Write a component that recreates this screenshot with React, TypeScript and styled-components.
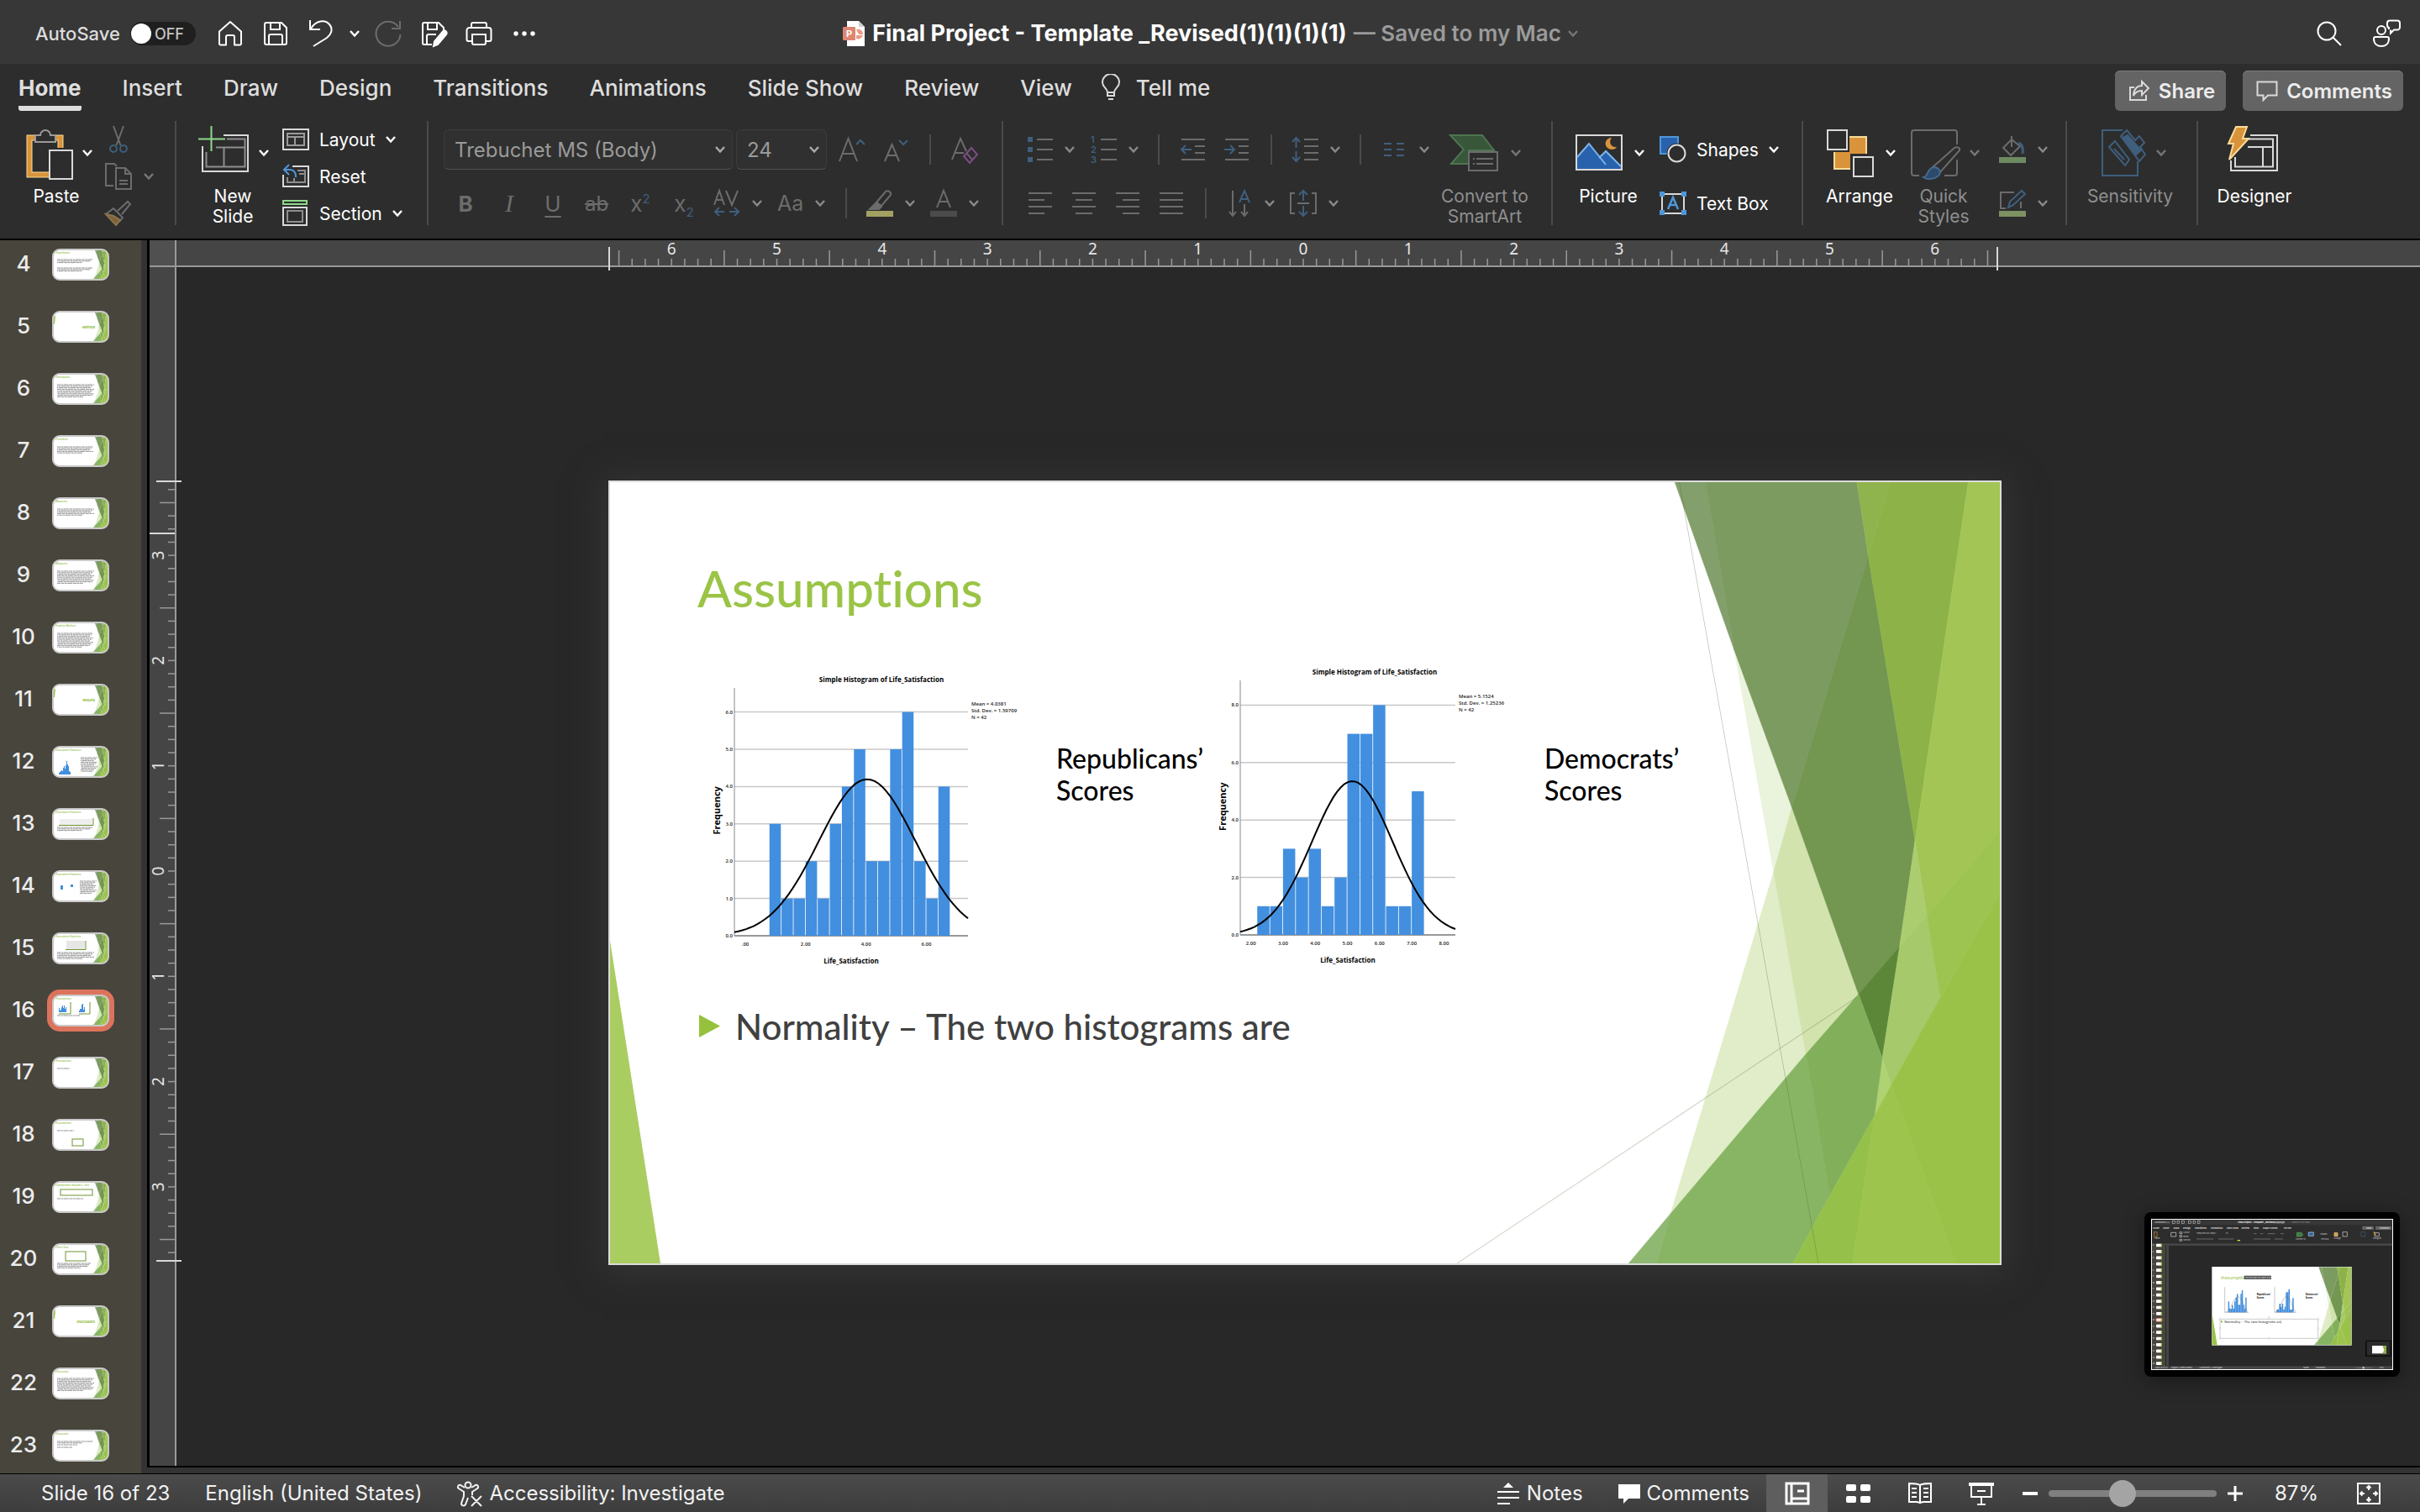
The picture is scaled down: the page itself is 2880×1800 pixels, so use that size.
import React from "react";
import styled, { createGlobalStyle, css } from "styled-components";

const GlobalStyle = createGlobalStyle`
  *, *::before, *::after { box-sizing: border-box; }
  html, body { margin: 0; padding: 0; background: #282828; }
  body { font-family: Inter, "Open Sans", sans-serif; color: #fff; overflow: hidden; }
  button, select, input { font: inherit; color: inherit; margin: 0; }
  button { background: none; border: 0; padding: 0; }
  h1, h2, p, ul, ol { margin: 0; padding: 0; font-weight: inherit; }
  ul, ol { list-style: none; }
  svg { display: block; flex: none; }
`;

const ink = "#d9d9d9";
const dim = "#6c6c6c";
const dimBlue = "#3f5f7d";
const blue = "#4f97d8";
const orange = "#d9933b";
const cream = "#f7dc9a";
const green = "#8fd98a";

/* ---------- shell ---------- */

const Window = styled.div`
  display: flex;
  flex-direction: column;
  height: 100vh;
  min-height: 900px;
  overflow: hidden;
`;

const TitleBar = styled.header`
  display: grid;
  grid-template-columns: 1fr auto 1fr;
  align-items: center;
  height: 76px;
  padding: 4px 6px 0;
  background: #373737;
  flex: none;
`;

const TitleTools = styled.div<{ $end?: boolean }>`
  display: flex;
  align-items: center;
  justify-content: ${(p) => (p.$end ? "flex-end" : "flex-start")};
`;

const AutoSave = styled.label`
  display: flex;
  align-items: center;
  gap: 12px;
  margin: 0 14px 0 36px;
  font-size: 22px;
  font-weight: 500;
  color: #dcdcdc;
`;

const Switch = styled.span`
  position: relative;
  display: flex;
  align-items: center;
  justify-content: flex-end;
  width: 78px;
  height: 28px;
  padding-right: 14px;
  border-radius: 14px;
  background: #1f1f1f;
  font-size: 18px;
  color: #c4c4c4;
  input {
    position: absolute;
    inset: 0;
    width: 100%;
    height: 100%;
    appearance: none;
  }
  &::before {
    content: "";
    position: absolute;
    left: 1px;
    top: 2px;
    width: 24px;
    height: 24px;
    border-radius: 50%;
    background: #fff;
  }
`;

const IconButton = styled.button<{ $w?: number }>`
  display: flex;
  align-items: center;
  justify-content: center;
  width: ${(p) => p.$w ?? 54}px;
  height: 40px;
`;

const DocTitle = styled.h1`
  display: flex;
  align-items: center;
  gap: 8px;
  font-size: 27px;
  font-weight: 700;
  line-height: 32px;
  white-space: nowrap;
  span { color: #9b9b9b; font-size: 26px; font-weight: 600; }
`;

const TabBar = styled.nav`
  display: flex;
  align-items: flex-start;
  height: 64px;
  padding: 8px 20px 0 22px;
  background: #2d2d2d;
  flex: none;
`;

const Tabs = styled.div`
  display: flex;
  gap: 49px;
`;

const Tab = styled.button<{ $active?: boolean }>`
  display: flex;
  align-items: center;
  gap: 18px;
  height: 48px;
  padding: 2px 0 4px;
  border-bottom: 6px solid ${(p) => (p.$active ? "#dedede" : "transparent")};
  border-radius: 3px;
  font-size: 26px;
  font-weight: ${(p) => (p.$active ? 700 : 500)};
  color: #dedede;
  white-space: nowrap;
`;

const TellMe = styled(Tab)`
  margin-left: 34px;
`;

const Actions = styled.div`
  display: flex;
  gap: 20px;
  margin-left: auto;
`;

const ActionButton = styled.button`
  display: flex;
  align-items: center;
  gap: 10px;
  height: 48px;
  padding: 0 13px 0 16px;
  border-radius: 6px;
  background: #646464;
  box-shadow: inset 0 1px 0 #7c7c7c;
  font-size: 24px;
  font-weight: 600;
  color: #ececec;
`;

/* ---------- ribbon ---------- */

const Ribbon = styled.div`
  display: flex;
  align-items: flex-start;
  height: 144px;
  padding-top: 4px;
  background: #2d2d2d;
  flex: none;
`;

const Group = styled.section<{ $w?: number; $pad: number; $gap?: number }>`
  display: flex;
  align-items: center;
  gap: ${(p) => p.$gap ?? 14}px;
  height: 132px;
  width: ${(p) => (p.$w ? p.$w + "px" : "auto")};
  padding-left: ${(p) => p.$pad}px;
  flex: none;
`;

const Divider = styled.i<{ $small?: boolean }>`
  width: 2px;
  height: ${(p) => (p.$small ? 36 : 124)}px;
  margin: ${(p) => (p.$small ? "0 14px" : "0")};
  background: #4b4b4b;
  flex: none;
`;

const Stack = styled.div`
  display: flex;
  flex-direction: column;
`;

const ToolRow = styled.div`
  display: flex;
  align-items: center;
  height: 64px;
`;

const LargeTool = styled.button<{ $off?: boolean }>`
  display: flex;
  flex-direction: column;
  align-items: center;
  gap: 8px;
  height: 120px;
  font-size: 21px;
  line-height: 24px;
  color: ${(p) => (p.$off ? "#8f8f8f" : "#fff")};
  > span:first-child {
    display: flex;
    align-items: center;
    gap: 10px;
  }
  > span:last-child {
    display: flex;
    justify-content: center;
    width: 86px;
    text-align: center;
    white-space: pre;
  }
`;

const SmallTool = styled.button`
  display: flex;
  align-items: center;
  justify-content: center;
  width: 52px;
  height: 44px;
`;

const MenuTool = styled.button<{ $h?: number }>`
  display: flex;
  align-items: center;
  gap: 14px;
  width: 76px;
  height: ${(p) => p.$h ?? 44}px;
  padding-left: 9px;
`;

const TextTool = styled.button<{ $h: number }>`
  display: flex;
  align-items: center;
  gap: 12px;
  height: ${(p) => p.$h}px;
  font-size: 21px;
  color: #fff;
  white-space: nowrap;
`;

const PickerBox = styled.span<{ $w: number }>`
  position: relative;
  display: flex;
  align-items: center;
  width: ${(p) => p.$w}px;
  height: 48px;
  margin-right: 4px;
  svg { position: absolute; right: 9px; pointer-events: none; }
`;

const Picker = styled.select`
  appearance: none;
  width: 100%;
  height: 100%;
  padding: 0 12px;
  border: 1px solid #3c3c3c;
  border-bottom-color: #505050;
  border-radius: 6px;
  background: #303030;
  color: #9a9a9a;
  font-size: 24px;
`;

/* ---------- body ---------- */

const Body = styled.div`
  display: flex;
  flex: 1;
  min-height: 0;
  border-top: 2px solid #000;
  background: #333;
`;

const SlideList = styled.ol`
  width: 168px;
  overflow: hidden;
  background: #48453d;
  flex: none;
  li:first-child { margin-top: -8px; }
`;

const SlideItem = styled.button`
  display: flex;
  align-items: center;
  width: 100%;
  height: 74px;
  font-size: 26px;
  font-weight: 500;
  color: #ececec;
  > span:first-child { width: 56px; padding-bottom: 4px; text-align: center; }
`;

const Thumb = styled.span<{ $active?: boolean }>`
  width: 68px;
  height: 38px;
  margin-left: 6px;
  border: 2px solid #c9c9c9;
  border-radius: 9px;
  overflow: hidden;
  background: #fff;
  ${(p) => p.$active && css`box-shadow: 0 0 0 6px #dc735d;`}
`;

const Workspace = styled.main`
  display: grid;
  grid-template: 32px 1fr / 32px 1fr;
  flex: 1;
  min-width: 0;
  margin: 0 0 7px 7px;
  border-left: 3px solid #000;
  border-bottom: 2px solid #000;
`;

const Corner = styled.div`
  background: #505050;
  border-right: 2px solid #999;
  border-bottom: 2px solid #999;
`;

const RulerX = styled.div`
  display: flex;
  justify-content: center;
  padding-left: 12px;
  background: #454545;
  border-bottom: 2px solid #999;
  z-index: 1;
  svg { overflow: visible; }
`;

const RulerY = styled.div`
  display: flex;
  align-items: center;
  min-height: 0;
  padding-top: 10px;
  background: #454545;
  border-right: 2px solid #999;
  z-index: 1;
  svg { overflow: visible; }
`;

const Stage = styled.div`
  position: relative;
  display: flex;
  align-items: center;
  justify-content: center;
  min-height: 0;
  min-width: 0;
  padding: 14px 0 0 16px;
  background: #282828;
`;

const Slide = styled.article`
  position: relative;
  width: 1658px;
  height: 934px;
  border: 2px solid #dcdcdc;
  background: #fff;
  box-shadow: 0 4px 36px 8px rgba(64, 64, 64, 0.5);
  font-family: Lato, sans-serif;
  font-weight: 500;
  font-variant-ligatures: none;
  flex: none;
  > svg { position: absolute; }
`;

const SlideTitle = styled.h2`
  position: absolute;
  left: 104px;
  top: 90px;
  font-size: 60px;
  line-height: 72px;
  color: #9ac446;
`;

const ChartLabel = styled.p<{ $x: number }>`
  position: absolute;
  left: ${(p) => p.$x}px;
  top: 310px;
  font-size: 32px;
  line-height: 38px;
  color: #000;
  white-space: pre;
`;

const Bullet = styled.ul`
  position: absolute;
  left: 106px;
  top: 622px;
  font-size: 42px;
  line-height: 52px;
  color: #404040;
  li { display: flex; align-items: center; gap: 18px; white-space: nowrap; }
`;

const FloatingPreview = styled.figure`
  position: absolute;
  right: 24px;
  bottom: 106px;
  margin: 0;
  padding: 8px;
  border-radius: 8px;
  background: #000;
  box-shadow: 0 4px 24px rgba(0, 0, 0, 0.4);
  svg { border: 1px solid #fff; }
`;

/* ---------- status bar ---------- */

const StatusBar = styled.footer`
  display: flex;
  align-items: center;
  height: 46px;
  padding-right: 26px;
  border-top: 1px solid #000;
  background: linear-gradient(#4b4b4b, #3d3d3d);
  font-size: 24px;
  color: #f2f2f2;
  flex: none;
`;

const StatusButton = styled.button<{ $pad: number }>`
  display: flex;
  align-items: center;
  gap: 8px;
  height: 44px;
  padding-left: ${(p) => p.$pad}px;
  white-space: nowrap;
`;

const StatusEnd = styled.div`
  display: flex;
  align-items: center;
  margin-left: auto;
`;

const ViewButtons = styled.div`
  display: flex;
  margin-left: 20px;
`;

const ViewButton = styled.button<{ $active?: boolean }>`
  display: flex;
  align-items: center;
  justify-content: center;
  width: 73px;
  height: 45px;
  background: ${(p) => (p.$active ? "#5e5e5e" : "transparent")};
`;

const ZoomRange = styled.input`
  appearance: none;
  width: 200px;
  height: 32px;
  background: transparent;
  &::-webkit-slider-runnable-track {
    height: 8px;
    border-radius: 4px;
    background: #7f7f7f;
  }
  &::-webkit-slider-thumb {
    appearance: none;
    width: 32px;
    height: 32px;
    margin-top: -12px;
    border-radius: 50%;
    background: #a4a4a4;
  }
`;

const ZoomValue = styled.output`
  width: 102px;
  text-align: center;
`;

/* ---------- icons ---------- */

const Chevron = ({ c = "#fff" }: { c?: string }) => (
  <svg width="12" height="10" fill="none" stroke={c} strokeWidth="2.5">
    <path d="M1 2l5 5.500 5-5.500" />
  </svg>
);

type IcoProps = { s?: number; c?: string; w?: number; children: React.ReactNode };
const Ico = ({ s = 32, c = dim, w = 2, children }: IcoProps) => (
  <svg width={s} height={s} viewBox={`0 0 ${s} ${s}`} overflow="visible" fill="none" stroke={c} strokeWidth={w}>
    {children}
  </svg>
);

const HomeIcon = () => <Ico c="#fff"><path d="M3 13.500L16 2l13 11.500V28a1.500 1.500 0 0 1-1.500 1.500H21V20a2 2 0 0 0-2-2h-6a2 2 0 0 0-2 2v9.500H4.500A1.500 1.500 0 0 1 3 28z" strokeLinejoin="round" /></Ico>;
const SaveIcon = () => <Ico c="#fff"><path d="M5 3h18l6 6v18a2 2 0 0 1-2 2H5a2 2 0 0 1-2-2V5a2 2 0 0 1 2-2zM10 3v8h11V3M8 29V19a2 2 0 0 1 2-2h12a2 2 0 0 1 2 2v10" /></Ico>;
const UndoIcon = () => <Ico c="#fff"><path d="M3 0v11h12M4 10C10 0 21-1 26 5c5 6 2 12-3 16L7 31" /></Ico>;
const RedoIcon = () => <Ico c={dim}><path d="M30 1v9H20M28 8A14.500 14.500 0 1 0 30.500 17" /></Ico>;
const SavePenIcon = () => (
  <Ico c="#fff">
    <path d="M14 29H5a2 2 0 0 1-2-2V5a2 2 0 0 1 2-2h17l6 6v4M9 3v8h11V3M8 29V19a2 2 0 0 1 2-2h9" />
    <path d="M27 13.500a2.500 2.500 0 0 1 4 3.500L21 29l-5 2 1-5.500z" fill="#fff" />
  </Ico>
);
const PrintIcon = () => <Ico c="#fff"><path d="M8 25H3.500A2 2 0 0 1 1.500 23V12a3 3 0 0 1 3-3h23a3 3 0 0 1 3 3v11a2 2 0 0 1-2 2H24M7 9V5a2 2 0 0 1 2-2h14a2 2 0 0 1 2 2v4M8 17h16v10a2 2 0 0 1-2 2H10a2 2 0 0 1-2-2z" /></Ico>;
const DotsIcon = () => <Ico c="none"><g fill="#fff"><circle cx="6" cy="16" r="2.700" /><circle cx="16" cy="16" r="2.700" /><circle cx="26" cy="16" r="2.700" /></g></Ico>;
const SearchIcon = () => <Ico c="#fff"><circle cx="13" cy="13" r="10.500" /><path d="M20.500 20.500L30 30" /></Ico>;
const PresenceIcon = () => (
  <Ico s={34} c="#fff">
    <circle cx="11" cy="13" r="5" />
    <path d="M4 21h14a2 2 0 0 1 2 2c0 6-4 9-9 9s-9-3-9-9a2 2 0 0 1 2-2z" />
    <path d="M20 12v-2a3 3 0 0 1-2-3V4.500a3 3 0 0 1 3-3h9a3 3 0 0 1 3 3v5a3 3 0 0 1-3 3h-4l-4 4v-4" />
  </Ico>
);
const FileIcon = () => (
  <svg width="28" height="30">
    <path d="M6 0h14l7 7v23H6z" fill="#fff" />
    <path d="M27 7h-7V0z" fill="#d0d0d0" />
    <path d="M17 10a6 6 0 0 1 8 6h-5z M17 21a6 6 0 0 0 8-4h-8z" fill="#ea9a86" />
    <rect x="1" y="7" width="15" height="16" rx="1" fill="#dd8672" />
    <text x="5" y="19" fontSize="11" fontWeight="700" fill="#fff" fontFamily="Inter">P</text>
  </svg>
);
const BulbIcon = () => (
  <svg width="24" height="32" fill="none" stroke={ink} strokeWidth="2">
    <path d="M8 22c0-5-6-6-6-12a10 10 0 0 1 20 0c0 6-6 7-6 12zM8 22v4h8v-4M9 30h6" />
  </svg>
);
const ShareIcon = () => <Ico s={26} c={ink}><path d="M7 9H2v15h19v-6M16 2l8 8-8 8v-5c-5 0-8 2-10 6 0-7 4-12 10-12z" /></Ico>;
const CommentIcon = () => <Ico s={26} c={ink}><path d="M1.500 2.500h23v16H14l-5.500 5.500v-5.500h-7z" /></Ico>;

const PasteIcon = () => (
  <Ico s={64}>
    <path d="M19 14h-8v44h23M42 14h6v12" stroke={cream} strokeWidth="7" />
    <path d="M19 14h-8v44h23M42 14h6v12" stroke={orange} strokeWidth="5" />
    <path d="M18 19v-8h6a6 6 0 0 1 12 0h6v8z" stroke="#9a9a9a" />
    <rect x="35" y="29" width="27" height="34" stroke={ink} />
  </Ico>
);
const CutIcon = () => <Ico><path d="M10 0l8.500 23M22 0l-8.500 23" /><g stroke={dimBlue}><circle cx="10" cy="27" r="4" /><circle cx="22" cy="27" r="4" /></g></Ico>;
const CopyIcon = () => <Ico><path d="M10 27H1V1h10l3 3M13 6h11l7 7v18H13zM24 6v7h7M17 21h10M17 25h10" /></Ico>;
const BrushIcon = () => <Ico><path d="M1 17l9-7 11 11-4 5M15 13L27 2l3 3-10 12" /><path d="M1 17l12 13 5-6-8-5z" fill="#7d6236" stroke="#8a7450" /></Ico>;
const NewSlideIcon = () => (
  <Ico s={64}>
    <path d="M11.500 31v17.500h46v-33H36M23 25.500h34M32.500 26v22" stroke="#8e8e8e" />
    <path d="M7 24v30h54V11H32" stroke={ink} />
    <path d="M2 15.500h32M17.500 0v30" stroke={green} />
  </Ico>
);
const LayoutIcon = () => <Ico c={ink}><rect x="1" y="4" width="30" height="24" /><path d="M6 9h20v14H6zM6 13h20M15 13v10" stroke="#9a9a9a" /></Ico>;
const ResetIcon = () => (
  <Ico c={ink}>
    <path d="M12 4h19v24H1V14" />
    <path d="M18 9h9v14H6v-6M20 13h7M14 18v5" stroke="#8e8e8e" />
    <path d="M8 2L2 8l6 6M2 8h7c5 0 7 4 7 9" stroke={blue} />
  </Ico>
);
const SectionIcon = () => <Ico c={ink}><rect x="1" y="1" width="28" height="4" stroke={green} /><rect x="1" y="9" width="28" height="21" /><rect x="6" y="13" width="18" height="13" stroke="#8e8e8e" /></Ico>;

const Glyph = styled.span<{ $size?: number; $bold?: boolean; $italic?: boolean; $line?: string }>`
  font-size: ${(p) => p.$size ?? 26}px;
  font-weight: ${(p) => (p.$bold ? 700 : 400)};
  font-style: ${(p) => (p.$italic ? "italic" : "normal")};
  font-family: ${(p) => (p.$italic ? '"Liberation Serif", serif' : "inherit")};
  text-decoration: ${(p) => p.$line ?? "none"};
  text-underline-offset: 5px;
  text-decoration-thickness: 2px;
  color: ${dim};
  sup, sub { font-size: 15px; color: ${dimBlue}; line-height: 0; }
`;

const GrowIcon = ({ down }: { down?: boolean }) => (
  <Ico><path d={down ? "M3 30L11.500 10 20 30M6 23h11" : "M1 30L11.500 3 22 30M5 21h13"} /><path d={down ? "M20 5l5 5 5-5" : "M21 10l5-5 5 5"} stroke={dimBlue} /></Ico>
);
const ClearIcon = () => <Ico><path d="M1 28L11 3l7 15M4 20h11" /><path d="M24 14l7 8-9 10-7-8zM18 20l7 8" stroke="#7a4f80" /></Ico>;
const SpacingIcon = () => (
  <Ico><path d="M1 18L7 1l6 17M4 12h6M15 1l7 17 7-17" /><path d="M2 26h11M19 26h11M7 21l-5 5 5 5M25 21l5 5-5 5" stroke={dimBlue} /></Ico>
);
const HighlightIcon = () => <Ico><path d="M12 15l11-13c3-2 7 1 6 4L18 19z" /><path d="M12 15l6 5-3 3H4z" fill={dim} /><rect y="25" width="32" height="7" fill="#a3a162" stroke="none" /></Ico>;
const FontColorIcon = () => <Ico><path d="M8 21L16 1l8 20M11 14h10" /><rect y="25" width="32" height="7" fill="#4b4b4b" stroke="none" /></Ico>;

const BulletsIcon = () => <Ico><path d="M13 4h19M13 16h19M13 28h19" /><path d="M2 4h6M2 16h6M2 28h6" stroke={dimBlue} strokeWidth="6" /></Ico>;
const NumbersIcon = () => (
  <Ico><path d="M13 4h19M13 16h19M13 28h19" /><g fill={dimBlue} stroke="none" fontSize="11" fontWeight="600"><text x="1" y="8">1</text><text x="1" y="20">2</text><text x="1" y="32">3</text></g></Ico>
);
const IndentIcon = ({ out }: { out?: boolean }) => (
  <Ico><path d="M2 4h28M18 12h12M18 20h12M2 28h28" /><path d={out ? "M14 16H2M7 11l-5 5 5 5" : "M1 16h12M8 11l5 5-5 5"} stroke={dimBlue} /></Ico>
);
const LineSpaceIcon = () => <Ico><path d="M15 4h17M15 12h17M15 20h17M15 28h17" /><path d="M5.500 2v12M1 7l4.500-5L10 7M5.500 18v12M1 25l4.500 5 4.500-5" stroke={dimBlue} /></Ico>;
const ColumnsIcon = () => <Ico c={dimBlue}><path d="M4 9h9M4 16h9M4 23h9M19 9h9M19 16h9M19 23h9" /></Ico>;
const AlignIcon = ({ d }: { d: string }) => <Ico><path d={d} /></Ico>;
const TextDirIcon = () => <Ico><path d="M8 1v30M4 26l4 5 4-5M22 17v14M18 26l4 5 4-5" /><path d="M16 15l6-14 6 14M18 11h8" stroke={dimBlue} /></Ico>;
const VAlignIcon = () => <Ico><path d="M6 4H1v24h5M26 4h5v24h-5M9 16h14" /><path d="M16 13V1M11 6l5-5 5 5M16 19v12M11 26l5 5 5-5" stroke={dimBlue} /></Ico>;

const SmartArtIcon = () => (
  <Ico s={64}><path d="M2 11h38l14 18H24v16H3l15-17z" fill="#38563a" stroke="#4f7551" /><rect x="24" y="31" width="34" height="22" fill="#2d2d2d" /><path d="M29 39h2M33 39h20M29 45h2M33 45h20" /></Ico>
);
const PictureIcon = () => (
  <Ico s={64}>
    <rect x="5" y="11" width="54" height="41" stroke={ink} />
    <path d="M6 51V37l14-16 14 16 7-8 17 18v4z" fill="#2862ad" stroke="none" />
    <path d="M6 37l14-16 20 25M32 38l8-8 18 18" stroke="#7db4ea" />
    <path d="M47 14c-4 5-1 12 6 11-2 4-9 4-12 0s-1-11 6-11z" fill={orange} stroke="none" />
  </Ico>
);
const ShapesIcon = () => <Ico><rect x="1" y="1" width="21" height="20" fill="#2862ad" stroke={blue} /><circle cx="20.500" cy="20.500" r="12" fill="#2d2d2d" stroke="none" /><circle cx="20.500" cy="20.500" r="10" stroke={ink} /></Ico>;
const TextBoxIcon = () => (
  <Ico><rect x="3" y="5" width="26" height="23" stroke={ink} /><path d="M10 23l6-14 6 14M12 18h8" stroke={blue} strokeWidth="2.500" />
    <g fill={blue} stroke="none"><rect y="2" width="6" height="6" /><rect x="26" y="2" width="6" height="6" /><rect y="24" width="6" height="6" /><rect x="26" y="24" width="6" height="6" /></g></Ico>
);
const ArrangeIcon = () => (
  <Ico s={64}><rect x="13" y="13" width="38" height="38" fill={orange} stroke={cream} /><g fill="#2d2d2d"><path d="M3 3h28v28H3zM32 33h31v30H32z" stroke="none" /><rect x="5" y="5" width="23" height="23" stroke={ink} /><rect x="36" y="37" width="23" height="23" stroke={ink} /></g></Ico>
);
const QuickStylesIcon = () => (
  <Ico s={64}>
    <path d="M14 59H8a3 3 0 0 1-3-3V8a3 3 0 0 1 3-3h48a3 3 0 0 1 3 3v14M59 40v16a3 3 0 0 1-3 3H44" />
    <path d="M30 49L56 26c3-2 7 0 6 3L39 55z" />
    <path d="M19 61c6-1 4-10 12-12 8 0 10 8 5 11-5 4-13 4-17 1z" fill="#2b4a6c" stroke="#456a8f" />
  </Ico>
);
const FillIcon = () => <Ico><path d="M5 14L15 4l10 8-11 11zM15 4V0M15 4v9" /><path d="M23 8c5 2 6 7 5 13" stroke={dimBlue} strokeWidth="3" /><rect y="25" width="32" height="7" fill="#6d8a62" stroke="none" /></Ico>;
const OutlineIcon = () => <Ico><path d="M18 3H2v19h6M26 14v8" /><path d="M11 21l2-7L27 1l4 4-14 13z" stroke={dimBlue} /><rect y="25" width="32" height="7" fill="#7d9162" stroke="none" /></Ico>;
const SensitivityIcon = () => (
  <Ico s={64} c={dimBlue}>
    <path d="M34 5H10v54h42V42" />
    <path d="M18 25l7-7 17 22-5 7zM24 27l12 13" />
    <path d="M32 12l7-7 10 12 5-5 6 8-5 5 6 9-7 8z" fill="#2d2d2d" /><path d="M34 14l16 20 6-5-16-18z" fill={dimBlue} />
  </Ico>
);
const DesignerIcon = () => (
  <Ico s={64} c={ink}>
    <path d="M27 11h32v42H4V41M25 15.500h29v33H9V37M24 25h30M42 25v23" />
    <path d="M10 1h13l-5 14h7L2 40l5-19H1z" fill={orange} stroke={cream} />
  </Ico>
);

/* ---------- slide artwork ---------- */

const facets: [string, string][] = [
  ["#eaf3db", "490,350 695,655 630,780"],
  ["#e0edc8", "630,780 745,1135 262,1445"],
  ["#d2e3ae", "695,655 933,1018 745,1135 630,780"],
  ["#829f6c", "277,22 385,22 490,350"],
  ["#7c9b61", "385,22 927,22 968,165 695,655 490,350"],
  ["#739751", "968,165 1135,720 1080,925 933,1018 695,655"],
  ["#5c8739", "933,1018 1080,925 1018,1143"],
  ["#8fb44e", "927,22 1045,22 968,165"],
  ["#8db248", "1045,22 1325,22 1135,720 968,165"],
  ["#a2c555", "1325,22 1438,22 1438,700 1177,865 1135,720"],
  ["#abcd70", "1135,720 1177,865 1080,925"],
  ["#a5c96b", "1080,925 1177,865 1225,1025 1050,1195 1018,1143"],
  ["#afd273", "1018,1143 1050,1195 990,1255"],
  ["#9dc450", "1177,865 1438,700 1438,820 1225,1025"],
  ["#8fb872", "112,1542 262,1445 212,1542"],
  ["#88b564", "262,1445 745,1135 830,1411 698,1542 212,1542"],
  ["#82b05a", "745,1135 933,1018 1018,1143 990,1255 830,1411"],
  ["#95c04a", "698,1542 830,1411 990,1255 912,1542"],
  ["#9dc44d", "912,1542 990,1255 1050,1195 1280,1542"],
  ["#9bc248", "1050,1195 1225,1025 1438,820 1438,1542 1280,1542"],
];

const FacetArt = (p: React.SVGProps<SVGSVGElement>) => (
  <svg viewBox="-501 22 1939 1520" preserveAspectRatio="none" {...p}>
    {facets.map(([fill, points]) => (
      <polygon key={points} points={points} fill={fill} stroke={fill} strokeWidth="1" />
    ))}
    <g stroke="#506030" strokeOpacity="0.400" strokeWidth="2" fill="none">
      <path d="M293 22L790 1542" />
      <path d="M-501 1542L925 1025" strokeOpacity="0.250" />
    </g>
  </svg>
);

type HistogramProps = {
  x: number; y: number; baseline: number; axisLeft: number; axisRight: number;
  unitX: number; zeroX: number; unitY: number; start: number; bars: number[];
  mean: number; sd: number; stepY: number; ticks: string[]; titleX: number; stats: string[]; labelX: number;
};

/* Histogram in slide coordinates, with the normal curve for the same mean and deviation. */
const Histogram = (h: HistogramProps) => {
  const px = (v: number) => h.zeroX + v * h.unitX;
  const py = (v: number) => h.baseline - v * h.unitY;
  const curve = Array.from({ length: 61 }, (_, i) => {
    const x = h.axisLeft + ((h.axisRight - h.axisLeft) * i) / 60;
    const z = ((x - h.zeroX) / h.unitX - h.mean) / h.sd;
    const f = (42 * 0.4 * Math.exp((-z * z) / 2)) / (h.sd * Math.sqrt(2 * Math.PI));
    return `${i ? "L" : "M"}${x.toFixed(1)} ${py(f).toFixed(1)}`;
  }).join("");
  const top = Math.max(...h.bars);
  const levels = Array.from({ length: top / h.stepY + 1 }, (_, i) => i * h.stepY);
  return (
    <svg style={{ left: h.x, top: h.y }} width="380" height="370" viewBox={`${h.x} ${h.y} 380 370`} fontFamily="Open Sans" fontSize="6" fontWeight="600">
      {levels.map((v) => (
        <g key={v}>
          <path d={`M${h.axisLeft} ${py(v)}H${h.axisRight}`} stroke={v ? "#c8c8c8" : "#777"} strokeWidth="1.500" />
          <text x={h.axisLeft - 2} y={py(v) + 2} textAnchor="end" fill="#222">{v.toFixed(1)}</text>
        </g>
      ))}
      <path d={`M${h.axisLeft} ${h.y + 25}V${h.baseline}`} stroke="#888" />
      {h.bars.map((n, i) => (
        <rect key={i} x={px(h.start + i * 0.4)} y={py(n)} width={h.unitX * 0.4 - 0.8} height={n * h.unitY} fill="#428fdf" />
      ))}
      <path d={curve} fill="none" stroke="#000" strokeWidth="2" />
      {h.ticks.map((t) => (
        <text key={t} x={px(Number(t))} y={h.baseline + 12} textAnchor="middle" fill="#222">{t}</text>
      ))}
      {h.stats.map((t, i) => (
        <text key={t} x={h.axisRight + 4} y={h.y + 46 + i * 8} fill="#222">{t}</text>
      ))}
      <g fontWeight="700" fontSize="8" textAnchor="middle">
        <text x={h.titleX} y={h.y + 18}>Simple Histogram of Life_Satisfaction</text>
        <text x={h.labelX} y={h.baseline + 33}>Life_Satisfaction</text>
        <text fontSize="11" transform={`translate(${h.axisLeft - 17} ${(py(top) + h.baseline) / 2 - 16}) rotate(-90)`}>Frequency</text>
      </g>
    </svg>
  );
};

/* ---------- rulers ---------- */

const UNIT = 125.3;

const HorizontalRuler = () => {
  const ticks = [];
  for (let i = -52; i <= 52; i++) ticks.push(i);
  return (
    <svg width="1652" height="30" viewBox="-826 0 1652 30">
      {ticks.map((i) => (
        <path key={i} d={`M${(i * UNIT) / 8} ${Math.abs(i) % 8 === 4 ? 12 : 22}V30`} stroke="#999" strokeWidth="1.500" />
      ))}
      <path d="M-826 8V36M826 8V36" stroke="#d8d8d8" strokeWidth="2" />
      {[-6, -5, -4, -3, -2, -1, 0, 1, 2, 3, 4, 5, 6].map((n) => (
        <text key={n} x={n * UNIT} y="17" fontSize="19" textAnchor="middle" fill="#e6e6e6" fontFamily="Noto Sans">{Math.abs(n)}</text>
      ))}
    </svg>
  );
};

const VerticalRuler = () => {
  const ticks = [];
  for (let i = -29; i <= 29; i++) ticks.push(i);
  return (
    <svg width="30" height="928" viewBox="0 -464 30 928">
      {ticks.map((i) => (
        <path key={i} d={`M${Math.abs(i) % 8 === 4 ? 12 : 22} ${(i * UNIT) / 8}H30`} stroke="#999" strokeWidth="1.500" />
      ))}
      <path d="M8 -464H38M8 464H38M0 -402H30" stroke="#d8d8d8" strokeWidth="2" />
      {[-3, -2, -1, 0, 1, 2, 3].map((n) => (
        <text key={n} transform={`translate(17 ${n * UNIT}) rotate(-90)`} fontSize="19" textAnchor="middle" fill="#e6e6e6" fontFamily="Noto Sans">{Math.abs(n)}</text>
      ))}
    </svg>
  );
};

/* ---------- slide thumbnails ---------- */

type ThumbData = { n: number; title: string; section?: boolean; body?: [number, number, number, number][]; art?: React.ReactNode };

const miniBars = (x: number, base: number, hs: number[], w = 1) => (
  <g fill="#428fdf">{hs.map((h, i) => <rect key={i} x={x + i * w} y={base - h} width={w} height={h} />)}</g>
);
const frame = (x: number, y: number, w: number, h: number) => <rect x={x} y={y} width={w} height={h} fill="none" stroke="#6f9430" />;

const thumbs: ThumbData[] = [
  { n: 4, title: "Hypotheses", body: [[4, 11, 42, 3], [4, 21, 42, 3]] },
  { n: 5, title: "Method", section: true },
  { n: 6, title: "Participants", body: [[4, 12, 44, 9]] },
  { n: 7, title: "Procedure", body: [[4, 12, 43, 5]] },
  { n: 8, title: "Measures", body: [[4, 12, 44, 5]] },
  { n: 9, title: "Measures", body: [[4, 12, 44, 9]] },
  { n: 10, title: "Analytic Method", body: [[4, 12, 43, 10]] },
  { n: 11, title: "Results", section: true },
  { n: 12, title: "Descriptive Statistics", body: [[32, 12, 20, 10]], art: miniBars(6, 32, [2, 3, 4, 5, 4, 8, 10, 7, 11, 16, 12, 10, 4, 3]) },
  { n: 13, title: "Descriptive Statistics", body: [[4, 21, 42, 3]], art: <><rect x="7" y="11" width="39" height="7" fill="#eee" /><path d="M6 18.500h41V10" fill="none" stroke="#6f9430" /></> },
  { n: 14, title: "Descriptive Statistics", body: [[31, 11, 20, 9]], art: <><rect x="8" y="16" width="3" height="5" fill="#428fdf" /><rect x="20" y="15" width="3" height="3" fill="#428fdf" /></> },
  { n: 15, title: "Descriptive Statistics", body: [[4, 22, 44, 5]], art: <><rect x="15" y="8" width="22" height="10" fill="#e6e6e6" /><path d="M14 18.500h24V8" fill="none" stroke="#6f9430" /></> },
  { n: 16, title: "Assumptions", body: [[4, 23, 27, 1]], art: <>{miniBars(6, 19, [5, 2, 3, 6, 8, 5, 8, 4, 6])}{miniBars(30, 19, [2, 4, 4, 9, 10, 3, 6])}<path d="M20 7v14H6M43 7v14H30" stroke="#6f9430" fill="none" /></> },
  { n: 17, title: "Assumptions", body: [[4, 12, 15, 1]] },
  { n: 18, title: "Assumptions", body: [[4, 12, 20, 1]], art: frame(22, 22, 13, 8) },
  { n: 19, title: "Independent Samples t-Test", body: [[4, 19, 31, 1]], art: frame(8, 8, 38, 7) },
  { n: 20, title: "Effect Size", body: [[4, 22, 40, 4]], art: frame(14, 8, 24, 11) },
  { n: 21, title: "Discussion", section: true },
  { n: 22, title: "Discussion", body: [[4, 11, 44, 9]] },
  { n: 23, title: "Discussion", body: [[4, 12, 43, 2], [4, 16, 24, 1], [4, 19, 18, 1]] },
];

const ThumbArt = ({ t }: { t: ThumbData }) => (
  <svg width="64" height="34" viewBox="0 0 64 34">
    <FacetArt x="39" y="0" width="25" height="34" />
    {t.section ? (
      <>
        <path d="M0 4h2l-1 10H0z" fill="#9ac446" />
        <text x="49" y="19" fontSize="4" fontWeight="700" textAnchor="end" fill="#8dbb3a">{t.title}</text>
      </>
    ) : (
      <text x="2" y="4" fontSize="3" fill="#8dbb3a">{t.title}</text>
    )}
    {t.body?.map(([x, y, w, n], k) => (
      <g key={k} stroke="#222" strokeOpacity="0.700" strokeWidth="0.700" strokeDasharray="4 0.600 2.500 0.500 6 0.700">
        {Array.from({ length: n }, (_, i) => (
          <path key={i} d={`M${x} ${y + i * 1.8}h${i === n - 1 && n > 1 ? w * 0.7 : w - (i % 3) * 2}`} strokeDashoffset={i * 3} />
        ))}
      </g>
    ))}
    {t.art}
  </svg>
);

/* ---------- floating miniature ---------- */

const miniTabs: [number, string][] = [[127, "Home"], [163, "Insert"], [200, "Draw"], [234, "Design"], [275, "Transitions"], [332, "Animations"], [389, "Slide Show"], [443, "Review"], [485, "View"], [518, "Shape Format"], [593, "Tell me"]];

const Miniature = () => (
  <svg width="288" height="180" viewBox="123 99 858 534" preserveAspectRatio="none" fontFamily="Inter" role="img" aria-label="Miniature of the window">
    <rect x="123" y="99" width="858" height="534" fill="#282828" />
    <rect x="123" y="99" width="858" height="20" fill="#373737" />
    <rect x="123" y="119" width="858" height="65" fill="#2d2d2d" />
    <rect x="123" y="184" width="858" height="8" fill="#454545" />
    <rect x="123" y="184" width="48" height="438" fill="#48453d" />
    <rect x="174" y="184" width="9" height="438" fill="#454545" />
    <rect x="123" y="622" width="858" height="11" fill="#454545" />
    <g fill="#e4e4e4" fontSize="8">
      <text x="132" y="111">AutoSave</text>
      <text x="430" y="111" fontWeight="700" fill="#fff">Final Project - Template _Revised(1)(1)(1)(1)</text>
      <text x="612" y="111" fill="#999">— Saved to my Mac</text>
      {miniTabs.map(([x, t]) => <text key={t} x={x} y="131" fontWeight="600">{t}</text>)}
    </g>
    <rect x="166" y="105" width="22" height="7" rx="3" fill="#fff" fillOpacity="0.200" />
    <g fill="none" stroke="#ddd" strokeWidth="1.500">
      {[197, 213, 230, 254, 270, 286].map((x) => <rect key={x} x={x} y="104" width="8" height="8" />)}
    </g>
    <rect x="874" y="122" width="41" height="13" rx="2" fill="#646464" />
    <rect x="921" y="122" width="57" height="13" rx="2" fill="#646464" />
    <g fill="#eee" fontSize="7"><text x="888" y="131">Share</text><text x="935" y="131">Comments</text></g>
    <g fill="none" strokeWidth="2">
      <path d="M131 143h10v18h-10z" stroke={orange} />
      <path d="M191 145h18v14h-18zM222 143h8v6h-8zM222 155h8v6h-8zM222 169h8v6h-8z" stroke={ink} />
      <path d="M282 168h60M360 168h56M486 149h10M510 149h10M536 149h26M582 149h12M486 168h60M560 168h30" stroke="#8a8a8a" />
      <path d="M428 173h10" stroke="#dede40" strokeWidth="4" />
      <path d="M640 145h16l6 8-6 6h-16z" stroke="#5aa860" fill="#3f7a45" />
      <path d="M682 144h18v13h-18z" stroke={ink} fill="#2862ad" />
      <path d="M774 146h12v12h-12z" stroke={cream} fill={orange} />
      <path d="M804 143h16v16h-16z" stroke={ink} />
      <path d="M870 143h14v16h-14z" stroke={dimBlue} />
      <path d="M918 146h16v12h-16z" stroke={ink} />
      <path d="M915 142l6 12" stroke={orange} strokeWidth="4" />
    </g>
    <g fill="#ccc" fontSize="7"><text x="282" y="151">Trebuchet MS (Body)</text><text x="386" y="151">24</text><text x="235" y="148">Layout</text><text x="235" y="161">Reset</text><text x="235" y="175">Section</text><text x="133" y="169">Paste</text><text x="636" y="170">Convert to</text><text x="724" y="152">Shapes</text><text x="726" y="171">Text Box</text><text x="771" y="169">Arrange</text><text x="912" y="169">Designer</text></g>
    {Array.from({ length: 20 }, (_, i) => (
      <g key={i}>
        <rect x="138" y={185 + i * 22.2} width="21" height="11" rx="2" fill="#fff" stroke={i === 12 ? "#dc735d" : "none"} strokeWidth="3" />
        <rect x="155" y={185 + i * 22.2} width="4" height="11" rx="1" fill="#8db248" />
        <text x="125" y={193 + i * 22.2} fontSize="7" fill="#e4e4e4">{i + 4}</text>
      </g>
    ))}
    <rect x="337" y="267" width="499" height="281" fill="#fff" />
    <FacetArt x="640" y="268" width="195" height="279" />
    <path d="M338 436l18 111h-18z" fill="#9ac446" />
    <g fontFamily="Lato">
      <text x="369" y="313" fontSize="19" fill="#9ac446">Assumptio</text>
      <g fontSize="9" fontWeight="700"><text x="497" y="370">Republicans’</text><text x="497" y="381">Scores</text><text x="671" y="370">Democrats’</text><text x="671" y="381">Scores</text></g>
      <text x="382" y="468" fontSize="13" fill="#333">Normality – The two histograms are</text>
    </g>
    <rect x="452" y="299" width="97" height="13" fill="#555" />
    <text x="456" y="308" fontSize="7" fill="#ddd">Tell me what you want to do</text>
    <g transform="translate(395 430)" fill="#428fdf">{[39, 13, 13, 26, 13, 39, 52, 66, 27, 27, 66, 79, 27, 13, 53].map((h, i) => <rect key={i} x={i * 4.4} y={-h} width="4.400" height={h} />)}</g>
    <g transform="translate(568 430)" fill="#428fdf">{[10, 10, 31, 20, 31, 10, 20, 72, 72, 82, 10, 10, 51].map((h, i) => <rect key={i} x={i * 4.7} y={-h} width="4.700" height={h} />)}</g>
    <g fill="none" stroke="#555"><path d="M383 340v90h85M386 429c20-4 28-55 44-55s24 50 36 54M561 340v90h77M563 429c20-4 24-55 40-55s22 50 34 54" /></g>
    <path d="M369 458l9 5-9 5z" fill="#9ac446" />
    <path d="M366 454h350v69H366zM584 457v13M540 444v10" fill="none" stroke="#999" strokeWidth="1.500" />
    <g fill="#fff" stroke="#999">{[366, 540, 716].flatMap((x) => [454, 488, 523].filter((y) => !(x === 540 && y === 488)).map((y) => <circle key={`${x}-${y}`} cx={x} cy={y} r="3" />))}</g>
    <rect x="885" y="530" width="92" height="58" rx="3" fill="#0c0c0c" />
    <rect x="890" y="534" width="83" height="50" fill="#2b2b2b" />
    <rect x="909" y="549" width="51" height="28" fill="#fff" />
    <path d="M946 549h14v28h-14l6-12z" fill="#8db248" />
    <g fill="#ddd" fontSize="7"><text x="134" y="631">Slide 16 of 23</text><text x="192" y="631">English (United States)</text><text x="292" y="631">Accessibility: Investigate</text><text x="664" y="631">Notes</text><text x="707" y="631">Comments</text><text x="936" y="631">87%</text></g>
    <path d="M850 628h60" stroke="#888" strokeWidth="2" /><circle cx="878" cy="628" r="4" fill="#bbb" />
  </svg>
);

/* ---------- page ---------- */

const Large = ({ icon, label, menu = true, off }: { icon: React.ReactNode; label: string; menu?: boolean; off?: boolean }) => (
  <LargeTool $off={off}>
    <span>{icon}{menu && <Chevron c={off ? "#777" : "#fff"} />}</span>
    <span>{label}</span>
  </LargeTool>
);

const Menu = ({ children, label, c = "#8a8a8a", h }: { children: React.ReactNode; label: string; c?: string; h?: number }) => (
  <MenuTool aria-label={label} $h={h}>{children}<Chevron c={c} /></MenuTool>
);

const tabs = ["Insert", "Draw", "Design", "Transitions", "Animations", "Slide Show", "Review", "View"];

export default function App() {
  return (
    <Window>
      <GlobalStyle />
      <TitleBar>
        <TitleTools>
          <AutoSave>
            AutoSave
            <Switch><input type="checkbox" role="switch" />OFF</Switch>
          </AutoSave>
          <IconButton aria-label="Home"><HomeIcon /></IconButton>
          <IconButton aria-label="Save"><SaveIcon /></IconButton>
          <IconButton aria-label="Undo"><UndoIcon /></IconButton>
          <IconButton aria-label="Undo history" $w={26}><Chevron /></IconButton>
          <IconButton aria-label="Redo"><RedoIcon /></IconButton>
          <IconButton aria-label="Save as"><SavePenIcon /></IconButton>
          <IconButton aria-label="Print"><PrintIcon /></IconButton>
          <IconButton aria-label="More"><DotsIcon /></IconButton>
        </TitleTools>
        <DocTitle>
          <FileIcon />
          Final Project - Template _Revised(1)(1)(1)(1) <span>— Saved to my Mac</span>
          <Chevron c="#777" />
        </DocTitle>
        <TitleTools $end>
          <IconButton aria-label="Search" $w={68}><SearchIcon /></IconButton>
          <IconButton aria-label="Presence" $w={68}><PresenceIcon /></IconButton>
        </TitleTools>
      </TitleBar>

      <TabBar>
        <Tabs>
          <Tab $active>Home</Tab>
          {tabs.map((t) => <Tab key={t}>{t}</Tab>)}
        </Tabs>
        <TellMe><BulbIcon />Tell me</TellMe>
        <Actions>
          <ActionButton><ShareIcon />Share</ActionButton>
          <ActionButton><CommentIcon />Comments</ActionButton>
        </Actions>
      </TabBar>

      <Ribbon>
        <Group $w={208} $pad={24} $gap={6}>
          <Large icon={<PasteIcon />} label="Paste" />
          <Stack>
            <Menu label="Cut" c="transparent"><CutIcon /></Menu>
            <Menu label="Copy" c="#777"><CopyIcon /></Menu>
            <Menu label="Format painter" c="transparent"><BrushIcon /></Menu>
          </Stack>
        </Group>
        <Divider />
        <Group $w={298} $pad={24} $gap={16}>
          <Large icon={<NewSlideIcon />} label={"New\nSlide"} />
          <Stack>
            <TextTool $h={44}><LayoutIcon />Layout<Chevron /></TextTool>
            <TextTool $h={44}><ResetIcon />Reset</TextTool>
            <TextTool $h={44}><SectionIcon />Section<Chevron /></TextTool>
          </Stack>
        </Group>
        <Divider />
        <Group $w={682} $pad={18}>
          <Stack>
            <ToolRow>
              <PickerBox $w={344}>
                <Picker aria-label="Font"><option>Trebuchet MS (Body)</option></Picker>
                <Chevron c="#aaa" />
              </PickerBox>
              <PickerBox $w={108}>
                <Picker aria-label="Font size"><option>24</option></Picker>
                <Chevron c="#aaa" />
              </PickerBox>
              <SmallTool aria-label="Grow font"><GrowIcon /></SmallTool>
              <SmallTool aria-label="Shrink font"><GrowIcon down /></SmallTool>
              <Divider $small />
              <SmallTool aria-label="Clear formatting"><ClearIcon /></SmallTool>
            </ToolRow>
            <ToolRow>
              <SmallTool><Glyph $bold>B</Glyph></SmallTool>
              <SmallTool><Glyph $italic $size={30}>I</Glyph></SmallTool>
              <SmallTool><Glyph $line="underline">U</Glyph></SmallTool>
              <SmallTool><Glyph $size={24} $line="line-through">ab</Glyph></SmallTool>
              <SmallTool><Glyph>x<sup>2</sup></Glyph></SmallTool>
              <SmallTool><Glyph>x<sub>2</sub></Glyph></SmallTool>
              <Menu label="Character spacing"><SpacingIcon /></Menu>
              <Menu label="Change case"><Glyph $size={25}>Aa</Glyph></Menu>
              <Divider $small />
              <Menu label="Highlight"><HighlightIcon /></Menu>
              <Menu label="Font color"><FontColorIcon /></Menu>
            </ToolRow>
          </Stack>
        </Group>
        <Divider />
        <Group $w={652} $pad={18}>
          <Stack>
            <ToolRow>
              <Menu label="Bullets"><BulletsIcon /></Menu>
              <Menu label="Numbering"><NumbersIcon /></Menu>
              <Divider $small />
              <SmallTool aria-label="Decrease indent"><IndentIcon out /></SmallTool>
              <SmallTool aria-label="Increase indent"><IndentIcon /></SmallTool>
              <Divider $small />
              <Menu label="Line spacing"><LineSpaceIcon /></Menu>
              <Divider $small />
              <Menu label="Columns"><ColumnsIcon /></Menu>
            </ToolRow>
            <ToolRow>
              <SmallTool aria-label="Align left"><AlignIcon d="M2 4h28M2 12h19M2 20h28M2 28h19" /></SmallTool>
              <SmallTool aria-label="Center"><AlignIcon d="M2 4h28M6 12h20M2 20h28M6 28h20" /></SmallTool>
              <SmallTool aria-label="Align right"><AlignIcon d="M2 4h28M10 12h20M2 20h28M10 28h20" /></SmallTool>
              <SmallTool aria-label="Justify"><AlignIcon d="M2 4h28M2 12h28M2 20h28M2 28h28" /></SmallTool>
              <Divider $small />
              <Menu label="Text direction"><TextDirIcon /></Menu>
              <Menu label="Align text"><VAlignIcon /></Menu>
            </ToolRow>
          </Stack>
          <Large icon={<SmartArtIcon />} label={"Convert to\nSmartArt"} off />
        </Group>
        <Divider />
        <Group $w={296} $pad={23} $gap={18}>
          <Large icon={<PictureIcon />} label="Picture" />
          <Stack>
            <TextTool $h={64}><ShapesIcon />Shapes<Chevron /></TextTool>
            <TextTool $h={64}><TextBoxIcon />Text Box</TextTool>
          </Stack>
        </Group>
        <Divider />
        <Group $w={312} $pad={24}>
          <Large icon={<ArrangeIcon />} label="Arrange" />
          <Large icon={<QuickStylesIcon />} label={"Quick\nStyles"} off />
          <Stack>
            <Menu label="Shape fill" h={64}><FillIcon /></Menu>
            <Menu label="Shape outline" h={64}><OutlineIcon /></Menu>
          </Stack>
        </Group>
        <Divider />
        <Group $w={154} $pad={32}>
          <Large icon={<SensitivityIcon />} label="Sensitivity" off />
        </Group>
        <Divider />
        <Group $pad={24}>
          <Large icon={<DesignerIcon />} label="Designer" menu={false} />
        </Group>
      </Ribbon>

      <Body>
        <SlideList>
          {thumbs.map((t) => (
            <li key={t.n}>
              <SlideItem>
                <span>{t.n}</span>
                <Thumb $active={t.n === 16}><ThumbArt t={t} /></Thumb>
              </SlideItem>
            </li>
          ))}
        </SlideList>
        <Workspace>
          <Corner />
          <RulerX><HorizontalRuler /></RulerX>
          <RulerY><VerticalRuler /></RulerY>
          <Stage>
            <Slide>
              <FacetArt width="646" height="930" style={{ right: 0, top: 0 }} />
              <svg width="62" height="384" style={{ left: 0, bottom: 0 }}><path d="M0 0L60 384H0z" fill="#aacd62" /></svg>
              <SlideTitle>Assumptions</SlideTitle>
              <Histogram
                x={110} y={220} baseline={540} axisLeft={148} axisRight={426} zeroX={161} unitX={35.9} unitY={44.4}
                start={0.8} bars={[3, 1, 1, 2, 1, 3, 4, 5, 2, 2, 5, 6, 2, 1, 4]} mean={4.0381} sd={1.59709} stepY={1}
                ticks={[".00", "2.00", "4.00", "6.00"]} titleX={323} labelX={287}
                stats={["Mean = 4.0381", "Std. Dev. = 1.59709", "N = 42"]}
              />
              <ChartLabel $x={531}>{"Republicans’\nScores"}</ChartLabel>
              <Histogram
                x={712} y={211} baseline={539} axisLeft={750} axisRight={1006} zeroX={686} unitX={38.3} unitY={34.2}
                start={2.2} bars={[1, 1, 3, 2, 3, 1, 2, 7, 7, 8, 1, 1, 5]} mean={5.1524} sd={1.25236} stepY={2}
                ticks={["2.00", "3.00", "4.00", "5.00", "6.00", "7.00", "8.00"]} titleX={910} labelX={878}
                stats={["Mean = 5.1524", "Std. Dev. = 1.25236", "N = 42"]}
              />
              <ChartLabel $x={1112}>{"Democrats’\nScores"}</ChartLabel>
              <Bullet>
                <li><svg width="25" height="27"><path d="M0 0l25 13.500L0 27z" fill="#95c13d" /></svg>Normality – The two histograms are</li>
              </Bullet>
            </Slide>
            <FloatingPreview><Miniature /></FloatingPreview>
          </Stage>
        </Workspace>
      </Body>

      <StatusBar>
        <StatusButton $pad={49}>Slide 16 of 23</StatusButton>
        <StatusButton $pad={42}>English (United States)</StatusButton>
        <StatusButton $pad={42}>
          <Ico s={30} c="#f2f2f2">
            <circle cx="13" cy="5" r="3.500" />
            <path d="M9 8L4 5c-3-1-4 3-2 4l6 4v5L5 27c0 3 4 3 5 1l3-8M17 8l5-3c3-1 4 3 2 4l-6 4v4M17 18l12 12M29 18L17 30" />
          </Ico>
          Accessibility: Investigate
        </StatusButton>
        <StatusEnd>
          <StatusButton $pad={0}>
            <Ico s={28} c="#fff"><path d="M1 12h26M1 19h26M1 26h15" /><path d="M14 1l6 6H8z" fill="#fff" stroke="none" /></Ico>
            Notes
          </StatusButton>
          <StatusButton $pad={42}>
            <Ico s={26} c="none"><path d="M0 2h26v17H12l-6 6v-6H0z" fill="#fff" /></Ico>
            Comments
          </StatusButton>
          <ViewButtons>
            <ViewButton $active aria-label="Normal view">
              <Ico s={30} c="#fff" w={3}><rect x="2" y="3" width="26" height="24" /><path d="M8 3v24M8 21h20M15 12h8" /></Ico>
            </ViewButton>
            <ViewButton aria-label="Slide sorter">
              <Ico s={30} c="none"><g fill="#fff"><rect y="4" width="12" height="8" rx="2" /><rect x="17" y="4" width="12" height="8" rx="2" /><rect y="18" width="12" height="8" rx="2" /><rect x="17" y="18" width="12" height="8" rx="2" /></g></Ico>
            </ViewButton>
            <ViewButton aria-label="Reading view">
              <Ico s={30} c="#fff"><path d="M15 5c-3-2-8-2-13-2v22h9c2 0 4 1 4 2 0-1 2-2 4-2h9V3c-5 0-10 0-13 2zM15 5v21M5 9h6M5 14h6M5 19h6M19 9h6M19 14h6M19 19h6" /></Ico>
            </ViewButton>
            <ViewButton aria-label="Slide show">
              <Ico s={30} c="#fff"><path d="M0 4h30" strokeWidth="4" /><path d="M3 5v14h24V5M10 12h10M15 19v8M10 28h10" /></Ico>
            </ViewButton>
          </ViewButtons>
          <IconButton aria-label="Zoom out" $w={44}><Ico s={18} c="#fff" w={4}><path d="M0 9h18" /></Ico></IconButton>
          <ZoomRange type="range" aria-label="Zoom" defaultValue={43} />
          <IconButton aria-label="Zoom in" $w={44}><Ico s={18} c="#fff" w={3}><path d="M0 9h18M9 0v18" /></Ico></IconButton>
          <ZoomValue>87%</ZoomValue>
          <IconButton aria-label="Fit slide to window" $w={70}>
            <Ico s={28} c="#fff"><rect x="1" y="2" width="26" height="24" /><path d="M14 5v5M14 18v5M4 14h5M19 14h5M11.500 7.500L14 5l2.500 2.500M11.500 20.500L14 23l2.500-2.500M6.500 11.500L4 14l2.500 2.500M21.500 11.500L24 14l-2.500 2.500" /></Ico>
          </IconButton>
        </StatusEnd>
      </StatusBar>
    </Window>
  );
}
